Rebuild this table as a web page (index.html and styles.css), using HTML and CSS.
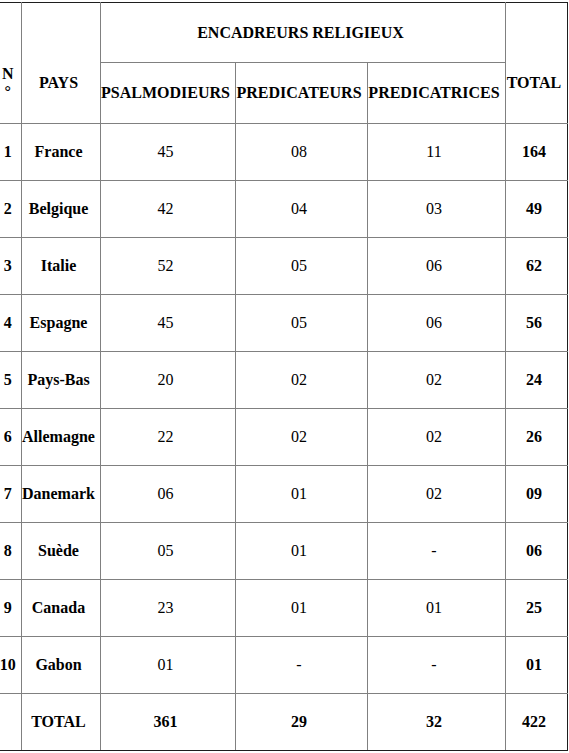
FILE: index.html
```
<!DOCTYPE html>
<html lang="fr">
<head>
<meta charset="utf-8">
<title>Encadreurs religieux</title>
<link rel="stylesheet" href="styles.css">
</head>
<body>
<table class="grid">
  <colgroup>
    <col class="c-num">
    <col class="c-pays">
    <col class="c-psal">
    <col class="c-pred">
    <col class="c-predf">
    <col class="c-total">
  </colgroup>
  <thead>
    <tr class="h1">
      <th rowspan="2" class="span start">N °</th>
      <th rowspan="2" class="span">PAYS</th>
      <th colspan="3">ENCADREURS RELIGIEUX</th>
      <th rowspan="2" class="span end">TOTAL</th>
    </tr>
    <tr class="h2">
      <th>PSALMODIEURS</th>
      <th>PREDICATEURS</th>
      <th>PREDICATRICES</th>
    </tr>
  </thead>
  <tbody>
    <tr><td class="b start">1</td><td class="b">France</td><td>45</td><td>08</td><td>11</td><td class="b end">164</td></tr>
    <tr><td class="b start">2</td><td class="b">Belgique</td><td>42</td><td>04</td><td>03</td><td class="b end">49</td></tr>
    <tr><td class="b start">3</td><td class="b">Italie</td><td>52</td><td>05</td><td>06</td><td class="b end">62</td></tr>
    <tr><td class="b start">4</td><td class="b">Espagne</td><td>45</td><td>05</td><td>06</td><td class="b end">56</td></tr>
    <tr><td class="b start">5</td><td class="b">Pays-Bas</td><td>20</td><td>02</td><td>02</td><td class="b end">24</td></tr>
    <tr><td class="b start">6</td><td class="b">Allemagne</td><td>22</td><td>02</td><td>02</td><td class="b end">26</td></tr>
    <tr><td class="b start">7</td><td class="b">Danemark</td><td>06</td><td>01</td><td>02</td><td class="b end">09</td></tr>
    <tr><td class="b start">8</td><td class="b">Suède</td><td>05</td><td>01</td><td>-</td><td class="b end">06</td></tr>
    <tr><td class="b start">9</td><td class="b">Canada</td><td>23</td><td>01</td><td>01</td><td class="b end">25</td></tr>
    <tr><td class="b start">10</td><td class="b">Gabon</td><td>01</td><td>-</td><td>-</td><td class="b end">01</td></tr>
    <tr class="sum"><td class="b start"></td><td class="b">TOTAL</td><td class="b">361</td><td class="b">29</td><td class="b">32</td><td class="b end">422</td></tr>
  </tbody>
</table>
</body>
</html>
```

FILE: styles.css
```
html, body {
  margin: 0;
  padding: 0;
  background: #ffffff;
}

body {
  font-family: "Liberation Serif", "Times New Roman", serif;
  font-size: 16px;
  color: #000000;
}

.grid {
  border-collapse: collapse;
  table-layout: fixed;
  width: 568px;
  margin: 2px 0 0 -1px;
  border-top: 1px solid #1e1e1e;
  border-bottom: 1px solid #1e1e1e;
  border-right: 1px solid #1e1e1e;
  border-left: 0;
}

.c-num { width: 22px; }
.c-pays { width: 79px; }
.c-psal { width: 135px; }
.c-pred { width: 132px; }
.c-predf { width: 138px; }
.c-total { width: 62px; }

.grid th,
.grid td {
  border: 1px solid #808080;
  padding: 0 4px 0 0;
  text-align: center;
  vertical-align: middle;
  line-height: 18px;
}

.grid th {
  font-weight: bold;
}

.grid td {
  font-weight: normal;
}

.grid td.b {
  font-weight: bold;
}

.h1 { height: 60px; }
.h2 { height: 61px; }
.grid tbody tr { height: 57px; }

.grid th.span {
  padding-top: 40px;
}

.grid .h1 th {
  border-top: 1px solid #1e1e1e;
}

.grid .sum td {
  border-bottom: 1px solid #1e1e1e;
}

.grid .start {
  border-left: 0;
}

.grid .end {
  border-right: 1px solid #1e1e1e;
}
```
